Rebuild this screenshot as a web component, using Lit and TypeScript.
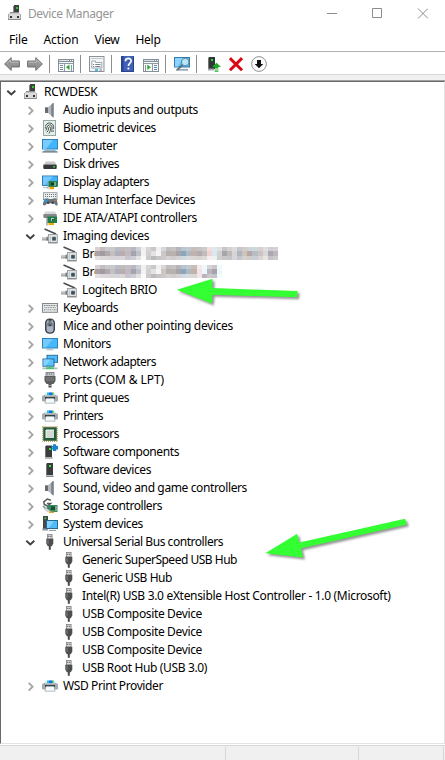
import { LitElement, html, css, svg, SVGTemplateResult } from "lit";
import { customElement, property } from "lit/decorators.js";
import { styleMap } from "lit/directives/style-map.js";

const wheel = svg`<g shape-rendering="crispEdges">
  <rect x="7" y="0" width="5" height="9" fill="#3f3f3f"/><rect x="6" y="1" width="1" height="8" fill="#8a8a8a"/>
  <rect x="9" y="2" width="2" height="2" fill="#2fc82f"/>
  <rect x="3" y="7" width="9" height="1" fill="#8d8d8d"/><rect x="2" y="8" width="11" height="1" fill="#c6c6c6"/>
  <rect x="1" y="9" width="13" height="5" fill="#dadada"/>
  <rect x="1" y="9" width="1" height="5" fill="#a8a8a8"/><rect x="13" y="9" width="1" height="5" fill="#a8a8a8"/>
  <rect x="1" y="14" width="13" height="1" fill="#8b8b8b"/>
  <rect x="3" y="11" width="2" height="2" fill="#333"/><rect x="10" y="11" width="2" height="2" fill="#333"/></g>`;
const printer = svg`<path d="M3 4.5H13L15.5 7V11H.5V7Z" fill="#777e84"/><path d="M3.5 3H12.5L13.5 6H2.5Z" fill="#dfe3e5"/>
  <rect x="5" y="2.4" width="2" height="2.8" fill="#20c8d8"/><rect x="7" y="2.4" width="3" height="2.8" fill="#1769ee"/><rect x="10" y="2.4" width="1.5" height="2.8" fill="#20c060"/>
  <rect x="0" y="5.5" width="16" height="6" rx="1" fill="#a4aaae"/><rect x="3" y="7" width="10" height="2" fill="#34383b"/>
  <path d="M4 8.3H12L13 13.2H3Z" fill="#f4f9fb" stroke="#87949a" stroke-width=".6"/>`;
const speaker = svg`<path d="M3 5.3H6V11H3Z" fill="#646b71"/><path d="M6 5.3L11.2 1V15.3L6 11Z" fill="#b4babf"/><path d="M9 3L11.2 1V15.3L9 13.5Z" fill="#858c92"/><path d="M11.2 1V15.3" stroke="#5f666c" stroke-width=".8"/>`;
const tower = svg`<rect x="5" y="1" width="6" height="12" fill="#3a3c3d"/><rect x="4" y="1.5" width="1" height="12" fill="#757575"/><rect x="7" y="3" width="2" height="2" fill="#35e235"/><path d="M4 13H11.5V15H4Z" fill="#bdc0c2"/><path d="M4 14.5H11.5" stroke="#8b8b8b"/>`;

const icons: Record<string, SVGTemplateResult> = {
  root: wheel,
  speaker,
  tower,
  printer,
  finger: svg`<rect x="1.5" y=".5" width="12" height="15" fill="#e3efeb" stroke="#94a9a3"/>
    <g fill="none" stroke="#3f4846" stroke-width=".9"><path d="M3.5 6.5C4 1.8 11 1.8 11.6 6.5V9"/><path d="M3.8 10.5C5.2 9.5 4.3 5 7.5 4.8S10 8 9.8 12"/><path d="M4.8 12.3C7.3 10.6 5.8 7 7.6 6.8S8.5 11 7 13.5"/><path d="M3.4 8.6V7"/><path d="M11.4 10.5L11 12"/></g>`,
  computer: svg`<rect x=".5" y="1.5" width="15" height="9.5" fill="#42b5fb" stroke="#2d82bd"/><path d="M1 2H11L4 11H1Z" fill="#78ccfe"/><path d="M3 12H13L15.5 14H.5Z" fill="#9cb1bf"/><path d="M.3 14H15.7" stroke="#526c7a"/>`,
  disk: svg`<path d="M4 5.5H12.5L14.5 8.5H1.8Z" fill="#c6c8ca"/><rect x="1.3" y="8.4" width="13.4" height="4.6" rx="1" fill="#35373a"/><rect x="11" y="10.2" width="2" height="1.3" fill="#30df30"/>`,
  display: svg`<rect x=".5" y="2" width="15" height="9.5" fill="#43b4fa" stroke="#2d7db5"/><path d="M1 2.5H11L3 11H1Z" fill="#74caff"/><path d="M1 13.5H6" stroke="#a9c2cf"/>
    <rect x="6.3" y="7" width="9.2" height="6" fill="#23804f"/><rect x="9" y="8.7" width="3" height="2.6" fill="#143826"/><path d="M6 6V15" stroke="#9aa"/><path d="M7.5 14H12" stroke="#efa000" stroke-width="2.4"/><path d="M13 8V12" stroke="#b6dfc2"/>`,
  hid: svg`<rect x="1.5" y=".7" width="13.5" height="7" fill="#eceff0" stroke="#8b9296" stroke-width=".8"/><path d="M3 2.5H14M3 4.5H14" stroke="#70777b" stroke-dasharray="1 1"/>
    <path d="M2.5 7C4 5.7 6 6 7 7H10.2C12 5.7 14 6 14.7 7.5L15.7 12C15.3 14.5 13.6 13.8 12.2 11.2H5C3.5 14 1.2 14 .8 12Z" fill="#68747d"/><circle cx="4" cy="8.7" r="1.4" fill="#2499e3"/><circle cx="6.2" cy="10.8" r="1.3" fill="#3d464c"/><circle cx="10.7" cy="10.8" r="1.3" fill="#3d464c"/><circle cx="13" cy="8.5" r="1" fill="#e36d44"/>`,
  ide: svg`<path d="M3.5 1.5H13L15 4.5H1.5Z" fill="#d6d8d8"/><rect x="1.3" y="4" width="13.5" height="4" rx="1" fill="#85898b"/>
    <rect x="5.5" y="6.5" width="9.5" height="6.5" fill="#1f7c49"/><rect x="9" y="8" width="2.8" height="2.7" fill="#acdcb9"/><rect x="10" y="9" width="1.8" height="1.7" fill="#15462b"/><path d="M5 6V15.5" stroke="#777"/><path d="M6.5 14H12" stroke="#eca600" stroke-width="2.2"/>`,
  camera: svg`<path d="M2.5 .9L14 6" stroke="#4b4f52" stroke-width="1.6"/><path d="M0 10.3H5.5" stroke="#c0c3c5" stroke-width="2.2"/><path d="M0 11.9H6" stroke="#85898c"/><path d="M5.2 8.6V12.6" stroke="#4d5256"/>
    <rect x="6.5" y="6.5" width="8.8" height="8.5" fill="#e3e5e6" stroke="#969b9e" stroke-width=".9"/><path d="M7 14.6H15" stroke="#777c7f" stroke-width=".8"/><rect x="10" y="8.7" width="4" height="4" rx="1" fill="#5a6468"/><rect x="11" y="9.7" width="2" height="2" fill="#1c5963"/><path d="M8.3 7.5V14" stroke="#b3b8bb" stroke-width=".8"/>`,
  keyboard: svg`<rect x=".5" y="3.5" width="15" height="8.8" fill="#e6e8e9" stroke="#85898c"/><path d="M2 5.5H14.5M2 9.8H4M12 9.8H14.5" stroke="#6f7478" stroke-dasharray="1 .7"/><path d="M2.5 7.6H14M4.5 9.8H11.5" stroke="#858a8d" stroke-dasharray="1 .7"/>`,
  mouse: svg`<rect x="3" y=".4" width="10" height="15.4" rx="4.6" fill="#3c424a"/><rect x="4.5" y="1.5" width="7" height="12.9" rx="3.5" fill="#a9b5c2"/><path d="M4.5 5V8Q8 9 11.5 8V5" fill="#7e8b99"/><rect x="6.7" y="1" width="2.6" height="7" rx="1" fill="#2f3439"/><path d="M8 2.5V6.5" stroke="#b9c2ca"/>`,
  monitor: svg`<rect x=".5" y="2.5" width="15" height="9.5" fill="#45b7fb" stroke="#2d82bb"/><path d="M1 3H11L4 11.5H1Z" fill="#74caff"/><path d="M8 12V13.5M4.5 13.8H11.5" stroke="#9ab7c7"/>`,
  network: svg`<rect x="5" y="1.3" width="10.5" height="7" fill="#50bdfa" stroke="#27719e"/><rect x="1" y="5" width="11" height="7.2" fill="#5ac2ff" stroke="#246b97"/><path d="M1.5 5.5H9L3.5 11.7H1.5Z" fill="#85d3ff"/><path d="M7.5 12.4V14M4 14.3H12" stroke="#4dc16b" stroke-width="2"/><path d="M.3 14.3H4M12 14.3H15.5" stroke="#b4bcc0" stroke-width="1.7"/>`,
  port: svg`<rect x="4" y=".5" width="8" height="4" fill="#bfc1c2" stroke="#77797a" stroke-width=".8"/><path d="M5 2H11" stroke="#6c6c6c" stroke-dasharray="1 1"/><path d="M2.5 4H13.5V9L11.5 12H4.5L2.5 9Z" fill="#5b5d5f"/><path d="M4 6H12M4 8H12" stroke="#999b9d" stroke-width=".7"/><path d="M8 12V15.5" stroke="#4a4a4a" stroke-width="3"/><path d="M6 13.5H10" stroke="#aaa"/>`,
  cpu: svg`<rect x="1.2" y="1.2" width="13.6" height="13.6" fill="#255b3a"/><rect x=".6" y=".6" width="14.8" height="14.8" fill="none" stroke="#b59a3f" stroke-dasharray="1 1"/><rect x="4" y="4" width="8" height="8" fill="#d4d9d5"/><path d="M4 12V4H12" fill="none" stroke="#f1f3f1"/>`,
  component: svg`<rect x="4" y="1.5" width="6" height="11.5" fill="#3a3c3d"/><rect x="3" y="2" width="1" height="11.5" fill="#757575"/><rect x="7" y="4" width="2" height="2" fill="#35e235"/><rect x="3" y="13" width="7.5" height="2" fill="#b4b7b9"/><path d="M9.3 2H11V.3H14.2V2H16V5.4H14.2V7H11V5.4H9.3V4.2H10.4V3.2H9.3Z" fill="#1b83cb"/>`,
  storage: svg`<path d="M8.8 2.2L5.3 1L1.8 3.8L2.3 6.5L5.5 8L8.5 5.5H5" fill="none" stroke="#55595b" stroke-width="1.5"/><path d="M1 8L4 11L7 9" fill="none" stroke="#999da0" stroke-width="1.8"/>
    <path d="M5 7H15.5V14H5Z" fill="#398761"/><path d="M1 10.5H5L10 14.2H5Z" fill="#d5d7d5"/><rect x="9" y="8.5" width="4" height="3.5" fill="#195034"/><path d="M7 14.2H12" stroke="#d59c19" stroke-width="1.4"/><path d="M14 8V13" stroke="#a9cfb9"/>`,
  system: svg`<rect x="1" y="0" width="5" height="13" fill="#45484a"/><rect x="2.5" y="1.5" width="1.6" height="1.6" fill="#36e236"/><path d="M.3 13.5H6" stroke="#90989d" stroke-width="2"/><rect x="4.5" y="4.5" width="11" height="8" fill="#50bbfb" stroke="#2a688c"/><path d="M5 5H12L7 12H5Z" fill="#83d1ff"/><path d="M7 14.4H14" stroke="#8698a3"/>`,
  usb: svg`<rect x="5.5" y=".4" width="4.6" height="4.6" fill="#dcdcdc" stroke="#808284" stroke-width=".8"/><rect x="6.3" y="1.7" width="1" height="1.3" fill="#555"/><rect x="8.3" y="1.7" width="1" height="1.3" fill="#555"/><path d="M4.3 4.7H11.3V9.5L9.8 12.2H5.8L4.3 9.5Z" fill="#4c4e50"/><path d="M6 5.5V10" stroke="#7d7f81"/><path d="M7.8 12V15.8" stroke="#4a4a4a" stroke-width="2"/>`,
  back: svg`<path d="M.6 8L7.2 1.6V5H15.4V11H7.2V14.4Z" fill="#969696" stroke="#666" stroke-width=".9"/><path d="M2.5 7.6L6.5 3.9V6.2H14.8" fill="none" stroke="#bdbdbd"/><path d="M7 10H15" stroke="#808080"/>`,
  forward: svg`<path d="M15.4 8L8.8 1.6V5H.6V11H8.8V14.4Z" fill="#969696" stroke="#666" stroke-width=".9"/><path d="M1.2 6.2H9.5V3.9L13.5 7.6" fill="none" stroke="#bdbdbd"/><path d="M1 10H9" stroke="#808080"/>`,
  paneLeft: svg`<g shape-rendering="crispEdges"><rect x="0" y="3" width="16" height="13" fill="#858f98"/><rect x="1" y="6" width="14" height="9" fill="#f8f9fa"/><path d="M1 4.5H11" stroke="#dce1e5"/><path d="M12 4.5H13M14 4.5H15" stroke="#fff"/><path d="M1 7.5H15M6.5 7V15M13.5 9V15" stroke="#8f99a0"/><path d="M2 9.5H5M2 11.5H5M2 13.5H5" stroke="#7d8c99"/></g><path d="M11.5 8.5V14L8 11.2Z" fill="#2da531"/>`,
  paneRight: svg`<g shape-rendering="crispEdges"><rect x="0" y="3" width="16" height="13" fill="#858f98"/><rect x="1" y="6" width="14" height="9" fill="#f8f9fa"/><path d="M1 4.5H11" stroke="#dce1e5"/><path d="M12 4.5H13M14 4.5H15" stroke="#fff"/><path d="M1 7.5H15M9.5 7V15M2.5 9V15" stroke="#8f99a0"/><path d="M11 9.5H14M11 11.5H14M11 13.5H14" stroke="#5f89b9"/></g><path d="M4.3 8.5V14L7.8 11.2Z" fill="#2da531"/>`,
  properties: svg`<rect x=".5" y=".5" width="14.5" height="15" fill="#f3f4f5" stroke="#8b9298"/><path d="M2 2.5H13.5" stroke="#c2c7cb"/><path d="M2.8 12V5H6.5V6.5H12.8V12Z" fill="#fff" stroke="#8b969e" stroke-width=".8"/><path d="M4 8.5H5.2M4 10.5H5.2M6.2 8.5H11.5M6.2 10.5H11.5" stroke="#79858e"/><path d="M6 14H9" stroke="#28bde5" stroke-width="1.8"/><path d="M10.5 14H13" stroke="#9da5ab" stroke-width="1.5"/>`,
  help: svg`<rect x="1" y="0" width="13" height="16" fill="#3f62b8"/><rect x="1" y="0" width="2.5" height="16" fill="#2a4592"/><path d="M1.2 15.5H13.5V.3" fill="none" stroke="#2b4286"/><path d="M5.4 5.2C5.5 1.5 11.3 1.6 11.2 5C11.2 7.1 8.4 7.3 8.4 10" fill="none" stroke="#fff" stroke-width="1.7"/><circle cx="8.4" cy="12.5" r="1.1" fill="#fff"/>`,
  scan: svg`<rect x=".5" y="1.5" width="15" height="9.5" fill="#56bdf9" stroke="#337dab"/><path d="M1 2H9L4 10.5H1Z" fill="#8ad4ff"/><path d="M2 13.8H14" stroke="#9aa7b0" stroke-width="1.8"/><circle cx="11.2" cy="6" r="3.8" fill="#b7e5fb" stroke="#618498"/><path d="M8.5 9L3.2 13.8" stroke="#566d7a" stroke-width="1.8"/>`,
  update: svg`<rect x="4" y="1" width="6" height="12" fill="#333637"/><rect x="3" y="1.5" width="1" height="11.5" fill="#777"/><rect x="6" y="3" width="2" height="2" fill="#31dd31"/><path d="M3 13.5H9" stroke="#a3a8ab" stroke-width="2"/><path d="M11.5 6.8L16 11H13.4V12.5H9.6V11H7Z" fill="#21aa2a"/><path d="M9.6 14H13.4M9.6 15.7H13.4" stroke="#21aa2a" stroke-width="1.1"/>`,
  remove: svg`<path d="M3 3.2L13 13.2M13 3.2L3 13.2" stroke="#dc0714" stroke-width="3" stroke-linecap="square"/>`,
  disable: svg`<circle cx="8" cy="8" r="7.4" fill="#fbfbfb" stroke="#929292"/><path d="M6 4H10V8H12.3L8 12.3L3.7 8H6Z" fill="#111"/>`,
};

const icon = (name: string) => html`<svg class="icon" viewBox="0 0 16 16">${icons[name]}</svg>`;

interface Device {
  label: string;
  icon: string;
  level: number;
  width: number;
  open?: boolean;
  mask?: string[];
}
const d = (level: number, icon: string, label: string, width: number, extra: Partial<Device> = {}): Device => ({ level, icon, label, width, ...extra });

const maskA = [
  "d8d0d2 c4bcbe c9c9cd c9c9cd bcbcc4 c2bbbc c4bfc4 b8b8c4 cfcfd4 f2f0f0 d6d6d6 c8c8c8 f0f0f0 d8d6d6 c0bebe c6c3c3 b8b4b8 b7c4d2 c0c8d0 c5bebb c8c4c4 cccccc f5dede dfe9ef e0e0e0 c6c4c8 d4d2d2 dcdadc c6c6cc d6cbc7 c9d6dd ccd8dc d7cfd0 e0dde0 d0ced4 d4d2d6",
  "aaa2a8 a09ba2 b0a9ad c6bfbf adb0bd b9adb2 c2b9bd a3a3b2 bfbfc6 f2f2f2 d2d0d0 e6e2e2 f5f5f5 cbc7c7 b6b0b0 b8b1ae a9a4a8 8aa5bc aeb9c0 bfb3ad b5aaac c0bdbd eed3d4 dbe9ef d2d0d0 a7a5aa bcbbbc d8d4d2 acb5c0 cfc4bc b7a7a4 b5bdc8 cfc5c0 dad8d8 aaa8b0 bcb8bd",
  "e4dfe2 ddd7d8 dad6da d8d4d6 d4d4da ddd5d6 c8c6d0 d0ccd5 e3e0e2 fafafa cccaca bdbaba c6c4c4 cdc9c9 d5d1d1 ceccce d4d2d6 d0d8e0 d8dcdf ddd7d4 d8d3d4 dcdada f8ecec eaf2f5 d0cfd0 c9c7ca c6c5c8 d6d5d7 c3c6ce d7d1ce d1cbc9 c9ced6 dbd6d4 e6e4e5 c6c4ca cecbd0",
];
const tailB = ["f7e9ea eef9fc d6d4d8 c9c6cc eefbfd", "f5e3e4 eaf8fb b8b5be a8a3ab eaf8fb", "eee6e8 b9b5ba cbc8cc c6c3c8 f2fbfd"];
const maskB = maskA.map((line, r) => `${line.split(" ").slice(0, 20).join(" ")} ${tailB[r]}`);

const devices: Device[] = [
  d(0, "root", "RCWDESK", 53.5, { open: true }),
  d(1, "speaker", "Audio inputs and outputs", 135),
  d(1, "finger", "Biometric devices", 93),
  d(1, "computer", "Computer", 54),
  d(1, "disk", "Disk drives", 56),
  d(1, "display", "Display adapters", 86),
  d(1, "hid", "Human Interface Devices", 132),
  d(1, "ide", "IDE ATA/ATAPI controllers", 134),
  d(1, "camera", "Imaging devices", 86, { open: true }),
  d(2, "camera", "Bro", 19, { mask: maskA }),
  d(2, "camera", "Bro", 19, { mask: maskB }),
  d(2, "camera", "Logitech BRIO", 75),
  d(1, "keyboard", "Keyboards", 55),
  d(1, "mouse", "Mice and other pointing devices", 170),
  d(1, "monitor", "Monitors", 48),
  d(1, "network", "Network adapters", 93),
  d(1, "port", "Ports (COM & LPT)", 101),
  d(1, "printer", "Print queues", 66),
  d(1, "printer", "Printers", 40),
  d(1, "cpu", "Processors", 56),
  d(1, "component", "Software components", 116),
  d(1, "tower", "Software devices", 88),
  d(1, "speaker", "Sound, video and game controllers", 184),
  d(1, "storage", "Storage controllers", 99),
  d(1, "system", "System devices", 80),
  d(1, "usb", "Universal Serial Bus controllers", 160, { open: true }),
  d(2, "usb", "Generic SuperSpeed USB Hub", 155),
  d(2, "usb", "Generic USB Hub", 90),
  d(2, "usb", "Intel(R) USB 3.0 eXtensible Host Controller - 1.0 (Microsoft)", 308.5),
  d(2, "usb", "USB Composite Device", 120),
  d(2, "usb", "USB Composite Device", 120),
  d(2, "usb", "USB Composite Device", 120),
  d(2, "usb", "USB Root Hub (USB 3.0)", 125),
  d(1, "printer", "WSD Print Provider", 100),
];

/** A one-line label whose tracking is tuned so the text takes a given width. */
@customElement("fit-label")
export class FitLabel extends LitElement {
  static styles = css`
    :host { display: inline-block; white-space: nowrap; }
    span { display: inline-block; }
  `;
  @property() text = "";
  @property({ type: Number }) width = 0;

  render() {
    return html`<span>${this.text}</span>`;
  }

  updated() {
    const span = this.renderRoot.querySelector("span")!;
    span.style.letterSpacing = "0";
    const natural = span.getBoundingClientRect().width;
    span.style.letterSpacing = `${(this.width - natural) / this.text.length}px`;
  }
}

@customElement("app-root")
export class AppRoot extends LitElement {
  static styles = css`
    :host {
      display: flex; flex-direction: column; position: relative; box-sizing: border-box;
      width: 445px; height: 760px; overflow: hidden; background: #fff; color: #000;
      font: 12px/18px "Noto Sans", "Open Sans", sans-serif;
    }
    .icon { width: 16px; height: 16px; flex: none; display: block; }
    .title { display: flex; align-items: center; height: 27px; padding: 0 17px 0 7px; gap: 5px; color: #959595; flex: none; }
    .title fit-label { flex: 1; }
    .controls { width: 101px; height: 11px; flex: none; }
    .title .icon { margin-top: -1px; }
    .menu { display: flex; height: 24px; padding-left: 9px; gap: 16px; line-height: 25px; flex: none; }
    .toolbar { display: flex; height: 23px; padding: 4px 0 0 4px; box-sizing: border-box; gap: 7px; border-top: 1px solid #b3b3b3; flex: none; }
    .sep { width: 1px; height: 18px; margin: -1px 1px 0 -1px; background: #8d8d8d; flex: none; }
    .band { height: 6px; border-top: 1px solid #d9d9d9; background: #f0f0f0; flex: none; }
    .tree { flex: 1; padding-top: 1px; border: 1px solid #e3e3e3; border-top-color: #696969; border-left-color: #696969; box-shadow: 0 -1px #a0a0a0; }
    .row { display: flex; align-items: center; height: 18px; padding-left: 2px; }
    .row.l1 { padding-left: 21px; }
    .row.l2 { padding-left: 40px; }
    .chev { width: 16px; height: 16px; margin-right: 4px; flex: none; fill: none; stroke: #a6a6a6; stroke-width: 1.9; }
    .chev.open { stroke: #404040; }
    .row fit-label { margin-left: 5px; height: 18px; line-height: 17px; }
    .mask { display: grid; grid-auto-rows: 4.2px; margin: -1px 0 0 -6px; position: relative; }
    .strip { display: flex; }
    .cell { width: 5.08px; height: 4.2px; }
    .status { display: flex; height: 13px; margin-top: 1px; border-top: 1px solid #d7d7d7; background: #f0f0f0; padding-top: 1px; flex: none; }
    .part { border-right: 1px solid #d7d7d7; box-sizing: border-box; }
    .p1 { width: 226px; }
    .p2 { width: 133px; }
    .p3 { width: 85px; }
    .arrows { position: absolute; left: 0; top: 0; pointer-events: none; filter: drop-shadow(2px 2px 1.2px rgba(0, 0, 0, .42)); }
  `;

  private chevron(item: Device) {
    if (item.level === 2) return html`<svg class="chev"></svg>`;
    return item.open
      ? html`<svg class="chev open" viewBox="0 0 16 16"><path d="M4.3 6.7L8.3 10.4L12.3 6.7"/></svg>`
      : html`<svg class="chev" viewBox="0 0 16 16"><path d="M6.7 4.8L10.6 8.7L6.7 12.6"/></svg>`;
  }

  private mask(lines: string[]) {
    return html`<div class="mask">${lines.map(
      (line) => html`<div class="strip">${line.split(" ").map((c) => html`<div class="cell" style=${styleMap({ background: `#${c}` })}></div>`)}</div>`
    )}</div>`;
  }

  render() {
    return html`
      <div class="title">
        ${icon("root")}<fit-label text="Device Manager" width="85.5"></fit-label>
        <svg class="controls" viewBox="0 0 101 11" fill="none" stroke="#8c8c8c">
          <path d="M0 5.5H10M45.5 .5H54.5V9.5H45.5Z" /><path d="M91 .5L101 10.5M101 .5L91 10.5" />
        </svg>
      </div>
      <div class="menu">
        <fit-label text="File" width="18.5"></fit-label><fit-label text="Action" width="35"></fit-label>
        <fit-label text="View" width="25"></fit-label><fit-label text="Help" width="25"></fit-label>
      </div>
      <div class="toolbar">
        ${["back", "forward", "|", "paneLeft", "|", "properties", "|", "help", "paneRight", "|", "scan", "|", "update", "remove", "disable"].map((n) =>
          n === "|" ? html`<div class="sep"></div>` : icon(n)
        )}
      </div>
      <div class="band"></div>
      <div class="tree">
        ${devices.map(
          (item) => html`<div class="row l${item.level}">
            ${this.chevron(item)}${icon(item.icon)}<fit-label .text=${item.label} .width=${item.width}></fit-label>${item.mask ? this.mask(item.mask) : ""}
          </div>`
        )}
      </div>
      <div class="status"><div class="part p1"></div><div class="part p2"></div><div class="part p3"></div></div>
      <svg class="arrows" width="445" height="760" fill="#33ff33">
        <path d="M176.7 289.8L212.5 278.8V288L297.7 291L297 297.3L212.5 294.8L211.8 303.4Z" />
        <path d="M265.3 553.3L297.2 533.8L299.3 542.6L405 518.8L406.8 524.6L301 548.2L303 557.6Z" />
      </svg>
    `;
  }
}
